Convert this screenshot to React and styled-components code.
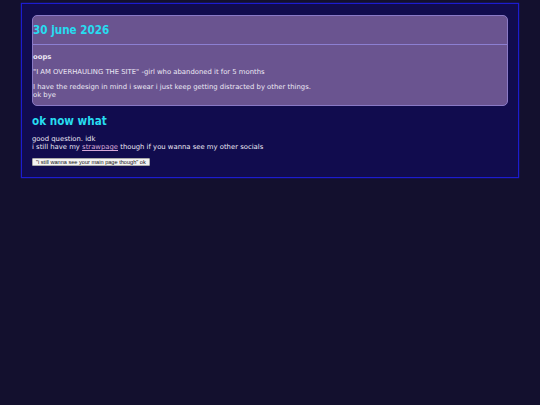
import React from "react";
import styled, { createGlobalStyle } from "styled-components";

const Global = createGlobalStyle`
  html, body {
    margin: 0;
    padding: 0;
    background: #13102e;
  }
  body {
    font-family: "DejaVu Sans", Verdana, sans-serif;
    font-size: 6.85px;
    color: #ece8f4;
  }
`;

const Page = styled.div`
  width: 540px;
  min-height: 405px;
  padding-top: 3px;
  box-sizing: border-box;
`;

const Wrapper = styled.main`
  width: 498px;
  margin: 0 auto;
  box-sizing: border-box;
  background: #110c4e;
  border: 1px solid #1c1cd0;
  box-shadow: 0 0 1px #2424e0;
  padding: 11px 10px 11px;
`;

const Card = styled.section`
  background: #6a5490;
  border: 1px solid #8a7ac6;
  border-radius: 5px;
  padding-bottom: 6px;
`;

const CardHead = styled.div`
  border-bottom: 1px solid #8c7fd2;
  padding: 8px 0 7px;
`;

const Title = styled.h2`
  margin: 0;
  color: #27dcf0;
  font-size: 11.6px;
  font-stretch: condensed;
  font-weight: bold;
  line-height: 13px;
`;

const CardBody = styled.div`
  padding-top: 8px;
`;

const Text = styled.p`
  margin: ${(p) => (p.$first ? "0" : "7px")} 0 0;
  line-height: 8px;
  font-weight: ${(p) => (p.$bold ? "bold" : "normal")};
`;

const Section = styled.section`
  padding-top: 9px;
`;

const Link = styled.a`
  color: #d6a8d8;
  text-decoration: underline;
`;

const Button = styled.button`
  display: block;
  margin-top: 7px;
  height: 8px;
  font-family: "Liberation Sans", Arial, sans-serif;
  font-size: 5.6px;
  line-height: 6px;
  padding: 0 3px;
  background: #f4f4f4;
  color: #111;
  border: 1px solid #aaa;
  border-radius: 1px;
`;

export default function App() {
  return (
    <Page>
      <Global />
      <Wrapper>
        <Card>
          <CardHead>
            <Title>30 june 2026</Title>
          </CardHead>
          <CardBody>
            <Text $first $bold>oops</Text>
            <Text>"I AM OVERHAULING THE SITE" -girl who abandoned it for 5 months</Text>
            <Text>
              I have the redesign in mind i swear i just keep getting distracted by other things.
              <br />
              ok bye
            </Text>
          </CardBody>
        </Card>
        <Section>
          <Title>ok now what</Title>
          <Text>
            good question. idk
            <br />
            i still have my <Link href="#">strawpage</Link> though if you wanna see my other socials
          </Text>
          <Button>"i still wanna see your main page though" ok</Button>
        </Section>
      </Wrapper>
    </Page>
  );
}
